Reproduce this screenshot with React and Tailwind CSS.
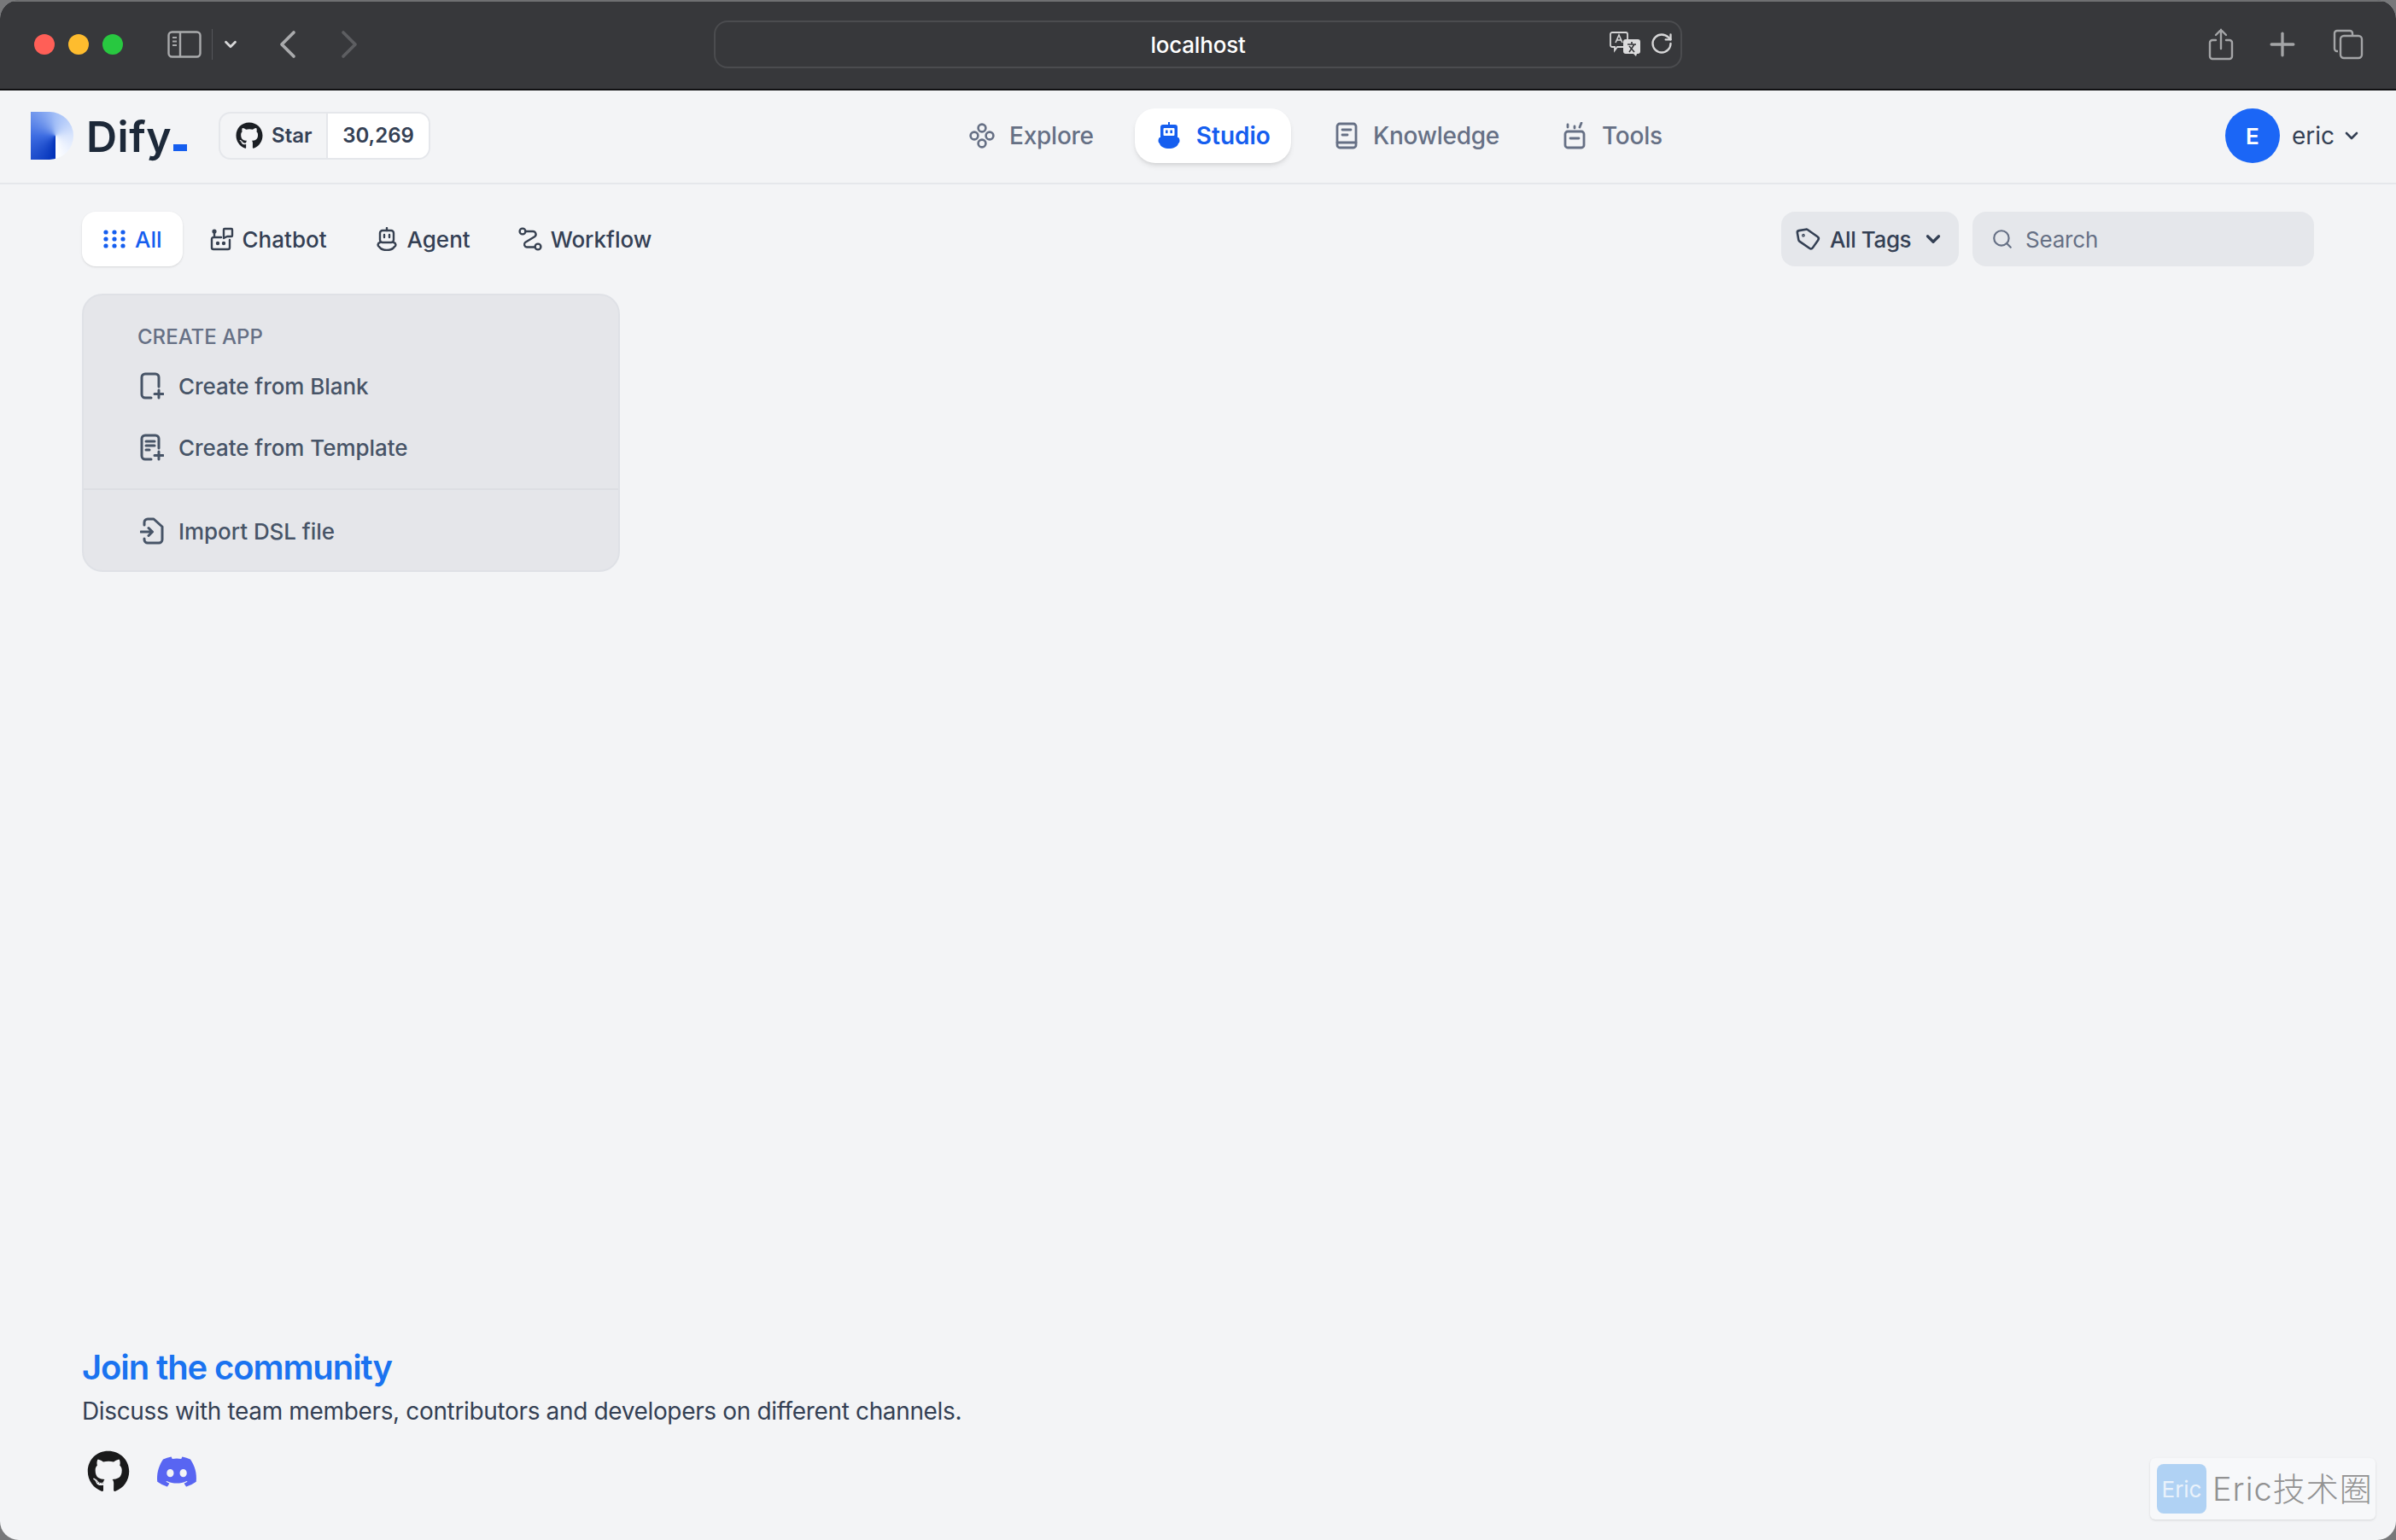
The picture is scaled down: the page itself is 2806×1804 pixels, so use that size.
import { ChevronDown, ChevronLeft, ChevronRight, Plus, RotateCw, Search, Tag } from 'lucide-react';
import { FaDiscord, FaGithub } from 'react-icons/fa';

const SidebarIcon = () => (
  <svg viewBox="0 0 40 32" className="w-[40px] h-[32px]" fill="none" stroke="#a9aaac" strokeWidth="2.4">
    <rect x="1.5" y="1.5" width="37" height="29" rx="4" />
    <path d="M15 2v28" />
    <path d="M6 8h5M6 12.5h5M6 17h5" strokeWidth="2" />
  </svg>
);

const TranslateIcon = () => (
  <svg viewBox="0 0 38 30" className="w-[38px] h-[30px]" fill="none">
    <path d="M4 2h16a2 2 0 0 1 2 2v13a2 2 0 0 1-2 2H10l-3 4v-4H4a2 2 0 0 1-2-2V4a2 2 0 0 1 2-2z" stroke="#d6d6d7" strokeWidth="1.8" />
    <path d="M8 14l4-9 4 9M9.5 11h5" stroke="#d6d6d7" strokeWidth="1.6" />
    <path d="M20 10h14a3 3 0 0 1 3 3v11a3 3 0 0 1-3 3h-1l-1 3-3-3h-9a3 3 0 0 1-3-3V13a3 3 0 0 1 3-3z" fill="#dcdcdd" />
    <path d="M22 16h10M27 13v3M24 25l6-9M24 18l6 7" stroke="#37383b" strokeWidth="1.6" />
  </svg>
);

const ShareIcon = () => (
  <svg viewBox="0 0 30 38" className="w-[30px] h-[38px]" fill="none" stroke="#a4a5a7" strokeWidth="2.4" strokeLinecap="round">
    <path d="M9 14H5a3 3 0 0 0-3 3v16a3 3 0 0 0 3 3h20a3 3 0 0 0 3-3V17a3 3 0 0 0-3-3h-4" />
    <path d="M15 24V2M9 8l6-6 6 6" />
  </svg>
);

const TabsIcon = () => (
  <svg viewBox="0 0 36 36" className="w-[36px] h-[36px]" fill="none" stroke="#a4a5a7" strokeWidth="2.4">
    <path d="M6 26H5a3 3 0 0 1-3-3V5a3 3 0 0 1 3-3h15a3 3 0 0 1 3 3v2" />
    <rect x="9" y="8" width="25" height="26" rx="4" />
  </svg>
);

const ExploreIcon = () => (
  <svg viewBox="0 0 32 32" className="w-[32px] h-[32px]" fill="none" stroke="#667085" strokeWidth="2.6">
    <circle cx="16" cy="7" r="4.4" />
    <circle cx="7" cy="16" r="4.4" />
    <circle cx="25" cy="16" r="4.4" />
    <circle cx="16" cy="25" r="4.4" />
  </svg>
);

const StudioIcon = () => (
  <svg viewBox="0 0 32 32" className="w-[32px] h-[32px]">
    <path d="M15 0h2v4h-2z" fill="#155eef" />
    <path d="M6 6a3 3 0 0 1 3-3h14a3 3 0 0 1 3 3v13H6z" fill="#155eef" />
    <path d="M5 18h22c2 2 2 6 0 7-1 4-6 6-11 6s-10-2-11-6c-2-1-2-5 0-7z" fill="#155eef" />
    <rect x="9.5" y="7" width="13" height="9" rx="1" fill="#fff" />
    <rect x="12" y="9.5" width="2.6" height="3.6" fill="#155eef" />
    <rect x="17.4" y="9.5" width="2.6" height="3.6" fill="#155eef" />
  </svg>
);

const KnowledgeIcon = () => (
  <svg viewBox="0 0 32 32" className="w-[32px] h-[32px]" fill="none" stroke="#667085" strokeWidth="2.8" strokeLinecap="round">
    <rect x="6" y="2" width="22" height="28" rx="3" />
    <path d="M6 24h22M12 9h10M12 15h6" />
  </svg>
);

const ToolsIcon = () => (
  <svg viewBox="0 0 32 32" className="w-[32px] h-[32px]" fill="none" stroke="#667085" strokeWidth="2.8" strokeLinecap="round">
    <rect x="5" y="11" width="22" height="19" rx="3" />
    <path d="M11 19h10M8 3v3M16 5v2M24 1l-2 5" />
  </svg>
);

const GridIcon = () => (
  <svg viewBox="0 0 28 28" className="w-[28px] h-[28px]" fill="#155eef">
    {[6, 14, 22].map(y =>
      [4, 14, 24].map(x => <circle key={`${x}-${y}`} cx={x} cy={y} r="2.6" />)
    )}
  </svg>
);

const ChatbotIcon = () => (
  <svg viewBox="0 0 28 28" className="w-[28px] h-[28px]" fill="none" stroke="#374151" strokeWidth="2.4" strokeLinecap="round" strokeLinejoin="round">
    <path d="M5 7v5M13 12H4a2 2 0 0 0-2 2v10a2 2 0 0 0 2 2h17a2 2 0 0 0 2-2v-9" />
    <path d="M17 2h8a1 1 0 0 1 1 1v7a1 1 0 0 1-1 1h-5l-4 2V3a1 1 0 0 1 1-1z" />
    <circle cx="5" cy="5" r="1.4" fill="#374151" />
    <circle cx="9" cy="19" r="1" fill="#374151" />
    <circle cx="16" cy="19" r="1" fill="#374151" />
  </svg>
);

const AgentIcon = () => (
  <svg viewBox="0 0 28 28" className="w-[28px] h-[28px]" fill="none" stroke="#374151" strokeWidth="2.4" strokeLinecap="round">
    <path d="M14 1v3" />
    <rect x="6" y="4" width="16" height="14" rx="3" />
    <path d="M11 9v3M17 9v3" />
    <path d="M6 18c-3 1-3 4-1 5 2 3 6 4 9 4s7-1 9-4c2-1 2-4-1-5" />
  </svg>
);

const WorkflowIcon = () => (
  <svg viewBox="0 0 28 28" className="w-[28px] h-[28px]" fill="none" stroke="#374151" strokeWidth="2.4" strokeLinecap="round" strokeLinejoin="round">
    <circle cx="5" cy="5" r="3.4" />
    <circle cx="23" cy="23" r="3.4" />
    <path d="M9 5h8a3.5 3.5 0 0 1 2.5 6L8 18a3.2 3.2 0 0 0 2 5.5h9" />
  </svg>
);

const BlankIcon = () => (
  <svg viewBox="0 0 28 32" className="w-[28px] h-[32px]" fill="none" stroke="#475467" strokeWidth="3" strokeLinecap="round">
    <path d="M13 30H6a4 4 0 0 1-4-4V6a4 4 0 0 1 4-4h12a4 4 0 0 1 4 4v11" />
    <path d="M22 21v9M17 25.5h10" />
  </svg>
);

const TemplateIcon = () => (
  <svg viewBox="0 0 28 32" className="w-[28px] h-[32px]" fill="none" stroke="#475467" strokeWidth="3" strokeLinecap="round">
    <path d="M13 30H6a4 4 0 0 1-4-4V6a4 4 0 0 1 4-4h12a4 4 0 0 1 4 4v11" />
    <path d="M7 9h10M7 14h10M7 19h4" />
    <path d="M22 21v9M17 25.5h10" />
  </svg>
);

const ImportIcon = () => (
  <svg viewBox="0 0 28 32" className="w-[28px] h-[32px]" fill="none" stroke="#475467" strokeWidth="3" strokeLinecap="round" strokeLinejoin="round">
    <path d="M5 9V6a4 4 0 0 1 4-4h7l10 9v15a4 4 0 0 1-4 4H9a4 4 0 0 1-4-4v-1" />
    <path d="M1 17h13M10 12.5l4.5 4.5-4.5 4.5" />
  </svg>
);

const navItems = [
  { label: 'Explore', icon: <ExploreIcon /> },
  { label: 'Studio', icon: <StudioIcon />, active: true },
  { label: 'Knowledge', icon: <KnowledgeIcon /> },
  { label: 'Tools', icon: <ToolsIcon /> },
];

const tabs = [
  { label: 'All', icon: <GridIcon />, active: true },
  { label: 'Chatbot', icon: <ChatbotIcon /> },
  { label: 'Agent', icon: <AgentIcon /> },
  { label: 'Workflow', icon: <WorkflowIcon /> },
];

function Toolbar() {
  return (
    <div className="h-[106px] shrink-0 flex items-center bg-[#37383b] border-t-2 border-t-[#6f7072] border-b-2 border-b-[#111113] pl-[40px] pr-[38px] pb-[2px]">
      <div className="flex gap-[16px]">
        <span className="w-[24px] h-[24px] rounded-full bg-[#ff5f57]" />
        <span className="w-[24px] h-[24px] rounded-full bg-[#febc2e]" />
        <span className="w-[24px] h-[24px] rounded-full bg-[#28c840]" />
      </div>
      <div className="ml-[52px] flex items-center">
        <SidebarIcon />
        <span className="w-[1px] h-[36px] ml-[12px] bg-[#55565a]" />
        <ChevronDown className="ml-[10px] text-[#d8d8d9]" size={22} strokeWidth={3} />
        <ChevronLeft className="ml-[28px] text-[#a9aaac]" size={56} strokeWidth={1.6} />
        <ChevronRight className="ml-[16px] text-[#5d5e61]" size={56} strokeWidth={1.6} />
      </div>
      <div className="ml-[399px] w-[1134px] h-[56px] relative flex items-center justify-center rounded-[16px] border-2 border-[#4b4c4f] text-white text-[26px] font-medium tracking-[-0.2px]">
        localhost
        <div className="absolute right-[8px] top-[10px] flex items-center gap-[10px]">
          <TranslateIcon />
          <RotateCw className="text-[#d6d6d7]" size={28} strokeWidth={2} />
        </div>
      </div>
      <div className="ml-auto flex items-center">
        <ShareIcon />
        <Plus className="ml-[35px] text-[#a4a5a7]" size={44} strokeWidth={1.8} />
        <span className="ml-[37px]">
          <TabsIcon />
        </span>
      </div>
    </div>
  );
}

function Header() {
  return (
    <header className="h-[110px] shrink-0 flex items-center border-b-2 border-[#e5e7eb] pl-[36px] pr-[40px] pb-[2px]">
      <span className="w-[50px] h-[56px] rounded-r-[28px] rounded-bl-none bg-[conic-gradient(from_180deg_at_58%_50%,#0030b8,#3e6de2_25%,#a3bff7_50%,#d9e5fd_75%,#ffffff)]" />
      <span className="ml-[15px] mt-[2px] text-[50px] leading-none font-semibold tracking-[0.5px] text-[#1d2939]">Dify</span>
      <span className="self-center mt-[28px] ml-[2px] w-[16px] h-[8px] bg-[#155eef]" />
      <div className="ml-[37px] h-[56px] flex rounded-[14px] border-2 border-[#e5e7eb] overflow-hidden text-[24px] font-semibold text-[#344054]">
        <div className="flex items-center pl-[18px] w-[126px] border-r-2 border-[#e5e7eb]">
          <FaGithub className="text-[#1b1f24]" size={32} />
          <span className="ml-[10px]">Star</span>
        </div>
        <div className="flex-1 flex items-center justify-center bg-white w-[118px]">30,269</div>
      </div>
      <nav className="ml-[606px] flex items-center gap-[24px] tracking-[-0.25px]">
        {navItems.map(item => (
          <div
            key={item.label}
            className={`h-[64px] px-[24px] flex items-center gap-[16px] rounded-[24px] text-[28px] font-medium ${
              item.active ? 'bg-white text-[#155eef] font-semibold tracking-normal shadow-md' : 'text-[#667085]'
            }`}
          >
            {item.icon}
            {item.label}
          </div>
        ))}
      </nav>
      <div className="ml-auto flex items-center">
        <span className="w-[64px] h-[64px] rounded-full bg-[#1b66f6] text-white text-[26px] font-semibold flex items-center justify-center">E</span>
        <span className="ml-[14px] text-[28px] text-[#344054]">eric</span>
        <ChevronDown className="ml-[8px] text-[#344054]" size={24} strokeWidth={2.6} />
      </div>
    </header>
  );
}

function CreateCard() {
  const row = 'h-[72px] flex items-center gap-[17px] pl-[66px] text-[26px] font-medium tracking-[-0.05px] text-[#475467]';
  return (
    <div className="w-[630px] h-[326px] mt-[32px] rounded-[24px] border-2 border-[#dfe1e6] bg-[#e5e6ea]">
      <div className="mt-[28px] h-[42px] flex items-center pl-[63px] text-[24px] font-medium text-[#667085]">CREATE APP</div>
      <div className={row}>
        <BlankIcon />
        Create from Blank
      </div>
      <div className={row}>
        <TemplateIcon />
        Create from Template
      </div>
      <div className="mt-[12px] h-[2px] bg-[#dcdee3]" />
      <div className={`${row} mt-[12px]`}>
        <ImportIcon />
        Import DSL file
      </div>
    </div>
  );
}

export default function App() {
  return (
    <div className="w-[2806px] h-[1804px] bg-[#77787a]" style={{ fontFamily: 'Inter, "Noto Sans CJK SC", sans-serif' }}>
      <div className="h-full rounded-[22px] overflow-hidden flex flex-col bg-[#f3f4f6]">
        <Toolbar />
        <Header />
        <main className="relative flex-1 flex flex-col px-[96px]">
          <div className="mt-[32px] flex items-center">
            <div className="flex items-center gap-[8px]">
              {tabs.map(tab => (
                <div
                  key={tab.label}
                  className={`h-[64px] px-[24px] flex items-center gap-[10px] rounded-[16px] text-[26px] font-medium ${
                    tab.active ? 'bg-white text-[#155eef] shadow-sm' : 'text-[#344054]'
                  }`}
                >
                  {tab.icon}
                  {tab.label}
                </div>
              ))}
            </div>
            <div className="ml-auto flex items-center gap-[16px]">
              <div className="w-[208px] h-[64px] flex items-center pl-[18px] rounded-[16px] bg-[#e5e7eb] text-[26px] font-medium tracking-[-0.4px] text-[#344054]">
                <Tag size={28} strokeWidth={2.2} className="rotate-[-10deg]" />
                <span className="ml-[11px]">All Tags</span>
                <ChevronDown className="ml-[13px]" size={26} strokeWidth={3} />
              </div>
              <div className="w-[400px] h-[64px] flex items-center pl-[22px] rounded-[16px] bg-[#e5e7eb] text-[26px] tracking-[-0.2px] text-[#667085]">
                <Search size={26} strokeWidth={2} />
                <span className="ml-[14px]">Search</span>
              </div>
            </div>
          </div>
          <CreateCard />
          <div className="mt-auto pb-[55px]">
            <h2 className="text-[40px] leading-[56px] font-semibold tracking-[-1.1px] text-[#1a73f0]">Join the community</h2>
            <p className="mt-[3px] text-[28px] leading-[40px] tracking-[-0.35px] text-[#344054]">Discuss with team members, contributors and developers on different channels.</p>
            <div className="mt-[26px] ml-[6px] flex items-center gap-[30px]">
              <FaGithub className="text-[#1a1a1b]" size={50} />
              <FaDiscord className="text-[#5865f2]" size={50} />
            </div>
          </div>
          <div className="absolute right-[24px] bottom-[24px] w-[264px] h-[72px] flex items-center pl-[8px] rounded-[6px] bg-[#f7f8fa] shadow-sm">
            <span className="w-[58px] h-[58px] rounded-[8px] bg-[#b0d2f4] text-[#eaf2fb] text-[26px] flex items-center justify-center">Eric</span>
            <span className="ml-[7px] text-[38px] font-light tracking-[1px] text-[#929292]">Eric技术圈</span>
          </div>
        </main>
      </div>
    </div>
  );
}
